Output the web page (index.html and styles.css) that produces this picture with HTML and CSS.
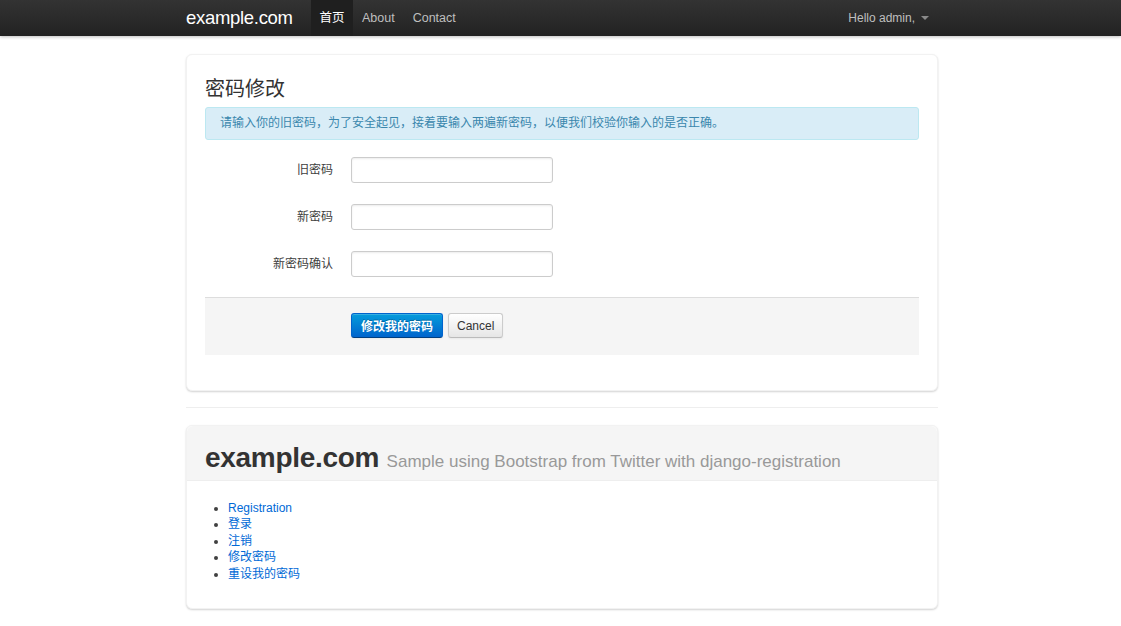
FILE: index.html
```html
<!DOCTYPE html>
<html lang="zh">
<head>
<meta charset="utf-8">
<title>密码修改</title>
<link rel="stylesheet" href="styles.css">
</head>
<body>
<header class="topbar">
  <div class="container topbar-inner">
    <a class="brand" href="#">example.com</a>
    <nav class="nav">
      <a class="nav-item active" href="#">首页</a>
      <a class="nav-item" href="#">About</a>
      <a class="nav-item" href="#">Contact</a>
    </nav>
    <div class="user">Hello admin, <span class="caret"></span></div>
  </div>
</header>

<main class="container">
  <section class="card form-card">
    <h2 class="title">密码修改</h2>
    <div class="alert">请输入你的旧密码，为了安全起见，接着要输入两遍新密码，以便我们校验你输入的是否正确。</div>
    <form class="form">
      <div class="row">
        <label class="label">旧密码</label>
        <input class="input" type="password">
      </div>
      <div class="row">
        <label class="label">新密码</label>
        <input class="input" type="password">
      </div>
      <div class="row">
        <label class="label">新密码确认</label>
        <input class="input" type="password">
      </div>
      <div class="actions">
        <button class="btn primary" type="button">修改我的密码</button>
        <button class="btn" type="button">Cancel</button>
      </div>
    </form>
  </section>

  <hr class="divider">

  <section class="card info-card">
    <div class="hero">
      <h1 class="hero-title">example.com <small>Sample using Bootstrap from Twitter with django-registration</small></h1>
    </div>
    <ul class="links">
      <li><a href="#">Registration</a></li>
      <li><a href="#">登录</a></li>
      <li><a href="#">注销</a></li>
      <li><a href="#">修改密码</a></li>
      <li><a href="#">重设我的密码</a></li>
    </ul>
  </section>
</main>
</body>
</html>
```
FILE: styles.css
```css
* { box-sizing: border-box; }
html, body { margin: 0; padding: 0; }
body {
  font-family: "Liberation Sans", "Noto Sans CJK SC", Arial, sans-serif;
  font-size: 12px;
  line-height: 18px;
  color: #404040;
  background: #fff;
  padding-left: 3px;
}
a { text-decoration: none; }
.container { width: 752px; margin: 0 auto; }

.topbar {
  height: 36px;
  background: linear-gradient(#333333, #222222);
  box-shadow: 0 1px 3px rgba(0,0,0,0.25);
  margin-left: -3px;
  padding-left: 3px;
}
.topbar-inner { display: flex; align-items: stretch; height: 36px; }
.brand {
  color: #fff;
  font-size: 18.5px;
  line-height: 36px;
  letter-spacing: -0.3px;
  width: 125px;
  white-space: nowrap;
}
.nav { display: flex; }
.nav-item {
  color: #bfbfbf;
  font-size: 12.5px;
  line-height: 36px;
  padding: 0 9px;
}
.nav-item.active { color: #fff; background: #1f1f1f; padding: 0 8.5px; }
.user {
  margin-left: auto;
  color: #bfbfbf;
  font-size: 12px;
  line-height: 36px;
  padding-right: 9px;
  display: flex;
  align-items: center;
  gap: 2px;
}
.caret {
  display: inline-block;
  width: 0; height: 0;
  margin-left: 4px;
  border-left: 4px solid transparent;
  border-right: 4px solid transparent;
  border-top: 4px solid #8a8a8a;
}

.card {
  background: #fff;
  border-radius: 6px;
  box-shadow: 0 1px 2px rgba(0,0,0,0.18);
  border: 1px solid #f2f2f2;
}
.form-card { margin-top: 18px; padding: 20px 18px 35px; }
.title {
  margin: 0 0 4px;
  font-size: 20px;
  line-height: 28px;
  font-weight: normal;
  color: #333;
}
.alert {
  background: #d9edf7;
  border: 1px solid #bce8f1;
  border-radius: 3px;
  color: #3a87ad;
  padding: 6px 14px 7px 14px;
  font-size: 12px;
  line-height: 18px;
  margin-bottom: 17px;
}
.form { display: flex; flex-direction: column; }
.row { display: flex; align-items: center; margin-bottom: 21px; }
.row:nth-child(3) { margin-bottom: 20px; }
.label {
  width: 128px;
  text-align: right;
  margin-right: 18px;
  font-size: 12px;
  color: #404040;
}
.input {
  width: 202px;
  height: 26px;
  border: 1px solid #ccc;
  border-radius: 3px;
  box-shadow: inset 0 1px 2px rgba(0,0,0,0.08);
  background: #fff;
}
.actions {
  background: #f5f5f5;
  border-top: 1px solid #ddd;
  padding: 15px 0 17px 146px;
  display: flex;
  gap: 5px;
}
.btn {
  font-family: inherit;
  height: 25px;
  padding: 0 8px;
  font-size: 12px;
  color: #333;
  white-space: nowrap;
  border: 1px solid #ccc;
  border-bottom-color: #bbb;
  border-radius: 3px;
  background: linear-gradient(#ffffff, #e6e6e6);
  box-shadow: inset 0 1px 0 rgba(255,255,255,0.2), 0 1px 2px rgba(0,0,0,0.05);
}
.btn.primary {
  width: 92px;
  padding: 0;
  color: #fff;
  font-weight: bold;
  background: linear-gradient(#049cdb, #0064cd);
  border-color: #0064cd #0064cd #003f81;
  text-shadow: 0 -1px 0 rgba(0,0,0,0.25);
}

.divider {
  border: 0;
  border-top: 1px solid #eee;
  margin: 16px 0 17px;
}

.info-card { padding: 0 0 26px; margin-bottom: 16px; }
.hero {
  background: #f5f5f5;
  border-bottom: 1px solid #eee;
  border-radius: 6px 6px 0 0;
  padding: 17px 18px 7px;
}
.hero-title {
  margin: 0;
  font-size: 28px;
  line-height: 30px;
  font-weight: bold;
  color: #333;
  letter-spacing: -0.3px;
}
.hero-title small {
  font-size: 17px;
  line-height: 1;
  font-weight: normal;
  color: #999;
  letter-spacing: 0;
}
.links {
  margin: 19px 0 0;
  padding-left: 41px;
  list-style: disc;
  line-height: 16.4px;
  font-size: 12px;
  color: #404040;
}
.links a { color: #0069d6; }
```
